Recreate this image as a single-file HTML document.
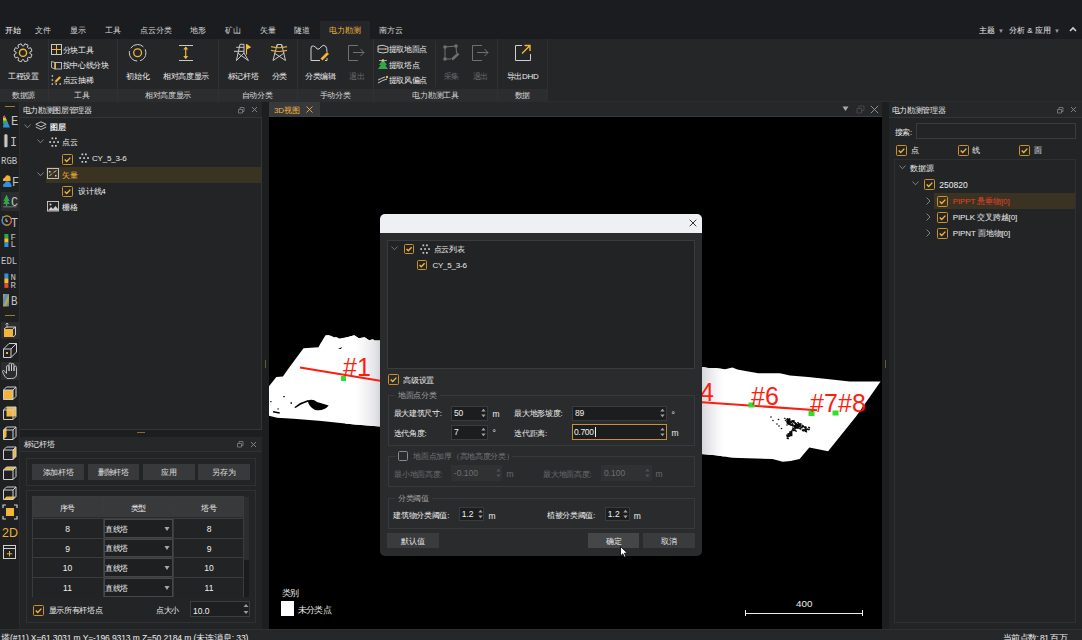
<!DOCTYPE html>
<html><head><meta charset="utf-8">
<style>
*{margin:0;padding:0;box-sizing:border-box}
html,body{width:1082px;height:640px;overflow:hidden;background:#232427;font-family:"Liberation Sans",sans-serif;color:#e6e6e6;font-size:8px;line-height:1}
.a{position:absolute}
.t{position:absolute;white-space:nowrap;line-height:10px;height:10px}
</style></head><body>

<div class="a" style="left:0px;top:0px;width:1082px;height:39px;background:#1b1c1f;"></div>
<div class="a" style="left:320px;top:21px;width:50px;height:18px;background:#252629;"></div>
<div class="a" style="left:0px;top:39px;width:1082px;height:62px;background:#252628;"></div>
<div class="a" style="left:0px;top:89px;width:547px;height:12px;background:#2c2d2f;"></div>
<div class="a" style="left:48px;top:39px;width:1px;height:62px;background:#303133;"></div>
<div class="a" style="left:117px;top:39px;width:1px;height:62px;background:#303133;"></div>
<div class="a" style="left:218px;top:39px;width:1px;height:62px;background:#303133;"></div>
<div class="a" style="left:297px;top:39px;width:1px;height:62px;background:#303133;"></div>
<div class="a" style="left:373px;top:39px;width:1px;height:62px;background:#303133;"></div>
<div class="a" style="left:497px;top:39px;width:1px;height:62px;background:#303133;"></div>
<div class="a" style="left:547px;top:39px;width:1px;height:62px;background:#2e2f31;"></div>
<div class="a" style="left:435px;top:41px;width:1px;height:46px;background:#303133;"></div>
<div class="a" style="left:0px;top:101px;width:1082px;height:1px;background:#2c2d30;"></div>
<div class="a" style="left:0px;top:102px;width:19px;height:528px;background:#1f2022;"></div>
<div class="a" style="left:19px;top:102px;width:1px;height:528px;background:#2b2c2e;"></div>
<div class="a" style="left:20px;top:102px;width:242px;height:328px;background:#232426;"></div>
<div class="a" style="left:20px;top:102px;width:242px;height:15px;background:#262729;"></div>
<div class="a" style="left:20px;top:117px;width:242px;height:1px;background:#343537;"></div>
<div class="a" style="left:261px;top:117px;width:1px;height:313px;background:#343537;"></div>
<div class="a" style="left:20px;top:429px;width:242px;height:1px;background:#343537;"></div>
<div class="a" style="left:20px;top:430px;width:242px;height:7px;background:#1d1e20;"></div>
<div class="a" style="left:137px;top:432px;width:8px;height:1px;background:#8a6a2a;"></div>
<div class="a" style="left:20px;top:437px;width:242px;height:192px;background:#232426;"></div>
<div class="a" style="left:20px;top:437px;width:242px;height:14px;background:#262729;"></div>
<div class="a" style="left:20px;top:451px;width:242px;height:1px;background:#303133;"></div>
<div class="a" style="left:262px;top:102px;width:7px;height:528px;background:#1d1e20;"></div>
<div class="a" style="left:882px;top:102px;width:7px;height:528px;background:#1d1e20;"></div>
<div class="a" style="left:265px;top:360px;width:1px;height:8px;background:#6a5a30;"></div>
<div class="a" style="left:885px;top:360px;width:1px;height:8px;background:#6a5a30;"></div>
<div class="a" style="left:269px;top:102px;width:613px;height:15px;background:#262729;"></div>
<div class="a" style="left:269px;top:102px;width:51px;height:15px;background:#38393b;"></div>
<div class="a" style="left:269px;top:116px;width:613px;height:1px;background:#3a3b3d;"></div>
<div class="a" style="left:269px;top:117px;width:613px;height:512px;background:#000;"></div>
<div class="a" style="left:889px;top:102px;width:193px;height:528px;background:#232426;"></div>
<div class="a" style="left:889px;top:102px;width:193px;height:15px;background:#262729;"></div>
<div class="a" style="left:889px;top:117px;width:193px;height:1px;background:#343537;"></div>
<div class="a" style="left:0px;top:630px;width:1082px;height:10px;background:#262729;"></div>
<div class="a" style="left:0px;top:629px;width:1082px;height:1px;background:#2e2f31;"></div>
<div class="t" style="left:5px;top:26px;color:#ffffff;font-size:8px;">开始</div>
<div class="t" style="left:35px;top:26px;color:#d6d6d6;font-size:8px;">文件</div>
<div class="t" style="left:70px;top:26px;color:#d6d6d6;font-size:8px;">显示</div>
<div class="t" style="left:105px;top:26px;color:#d6d6d6;font-size:8px;">工具</div>
<div class="t" style="left:140px;top:26px;color:#d6d6d6;font-size:8px;">点云分类</div>
<div class="t" style="left:190px;top:26px;color:#d6d6d6;font-size:8px;">地形</div>
<div class="t" style="left:225px;top:26px;color:#d6d6d6;font-size:8px;">矿山</div>
<div class="t" style="left:259.5px;top:26px;color:#d6d6d6;font-size:8px;">矢量</div>
<div class="t" style="left:294px;top:26px;color:#d6d6d6;font-size:8px;">隧道</div>
<div class="t" style="left:329px;top:26px;color:#f2b53a;font-size:8px;">电力勘测</div>
<div class="t" style="left:379px;top:26px;color:#d6d6d6;font-size:8px;">南方云</div>
<div class="t" style="left:979px;top:26px;color:#eeeeee;font-size:8px;">主题</div>
<div class="t" style="left:998px;top:26px;color:#9a9a9a;font-size:6px;">▼</div>
<div class="t" style="left:1009px;top:26px;color:#eeeeee;font-size:8px;">分析 &amp; 应用</div>
<div class="t" style="left:1054px;top:26px;color:#9a9a9a;font-size:6px;">▼</div>
<svg class="a" style="left:1069px;top:26px" width="8" height="6" viewBox="0 0 8 6" fill="none"><path d="M1 5 L4 2 L7 5" stroke="#d0d0d0" stroke-width="1.6"/></svg>
<svg class="a" style="left:13px;top:43px" width="20" height="20" viewBox="0 0 20 20" fill="none"><path d="M16.87 10.44 L19.01 11.65 L17.68 14.86 L15.31 14.21 L14.41 15.11 L15.06 17.48 L11.85 18.81 L10.64 16.67 L9.36 16.67 L8.15 18.81 L4.94 17.48 L5.59 15.11 L4.69 14.21 L2.32 14.86 L0.99 11.65 L3.13 10.44 L3.13 9.16 L0.99 7.95 L2.32 4.74 L4.69 5.39 L5.59 4.49 L4.94 2.12 L8.15 0.79 L9.36 2.93 L10.64 2.93 L11.85 0.79 L15.06 2.12 L14.41 4.49 L15.31 5.39 L17.68 4.74 L19.01 7.95 L16.87 9.16Z" stroke="#cfcfcf" stroke-width="1" stroke-linejoin="round"/><circle cx="10" cy="9.8" r="3.6" stroke="#f2b53a" stroke-width="1.4"/></svg>
<div class="t" style="left:-16.5px;width:80px;text-align:center;top:71.5px;color:#ececec;font-size:8px;letter-spacing:-0.3px">工程设置</div>
<svg class="a" style="left:51px;top:44px" width="11" height="11" viewBox="0 0 11 11" fill="none"><rect x="0.5" y="0.5" width="10" height="10" stroke="#c8c8c8"/><path d="M5.5 1 V10 M1 5.5 H10" stroke="#f2b53a" stroke-width="1"/></svg>
<div class="t" style="left:62.5px;top:45.5px;color:#f0f0f0;font-size:8px;letter-spacing:-0.3px;">分块工具</div>
<svg class="a" style="left:50px;top:60px" width="12" height="10" viewBox="0 0 12 10" fill="none"><path d="M1.5 1.5 L5 2.5 V9 L1.5 7.5Z" stroke="#c0c0c0" stroke-width="0.9"/><rect x="5" y="2.5" width="6.5" height="6.5" stroke="#c8c8c8" stroke-width="0.9"/><path d="M5.4 2.5 V9" stroke="#f2b53a" stroke-width="1.1"/></svg>
<div class="t" style="left:62.5px;top:60.599999999999994px;color:#f0f0f0;font-size:8px;letter-spacing:-0.3px;">按中心线分块</div>
<svg class="a" style="left:51px;top:75px" width="11" height="11" viewBox="0 0 11 11" fill="none"><g fill="#c8c8c8"><rect x="0.6" y="0.2" width="1.5" height="1.5"/><rect x="0.6" y="4.3" width="1.5" height="1.5"/><rect x="0.6" y="8.3" width="1.5" height="1.5"/><rect x="4.5" y="8.3" width="1.5" height="1.5"/><rect x="8.5" y="8.3" width="1.5" height="1.5"/></g><path d="M4.5 6.8 L9.3 2" stroke="#f2b53a" stroke-width="2.2"/><path d="M3.5 7.8 L4.6 6.7" stroke="#a07020" stroke-width="1.5"/></svg>
<div class="t" style="left:62.5px;top:75.5px;color:#f0f0f0;font-size:8px;letter-spacing:-0.3px;">点云抽稀</div>
<svg class="a" style="left:128px;top:43px" width="20" height="20" viewBox="0 0 20 20" fill="none"><circle cx="9.6" cy="9.8" r="8.3" stroke="#cfcfcf" stroke-width="1" stroke-dasharray="14.4 3" stroke-dashoffset="4"/><circle cx="9.6" cy="9.8" r="3.9" stroke="#f2b53a" stroke-width="1.3"/></svg>
<div class="t" style="left:97.80000000000001px;width:80px;text-align:center;top:71.5px;color:#ececec;font-size:8px;letter-spacing:-0.3px">初始化</div>
<svg class="a" style="left:178px;top:44px" width="16" height="18" viewBox="0 0 16 18" fill="none"><path d="M1 1.5 H15 M1 16.5 H15" stroke="#c8c8c8" stroke-width="1"/><path d="M7.7 3 V14.5" stroke="#f2b53a" stroke-width="1.2"/><path d="M5.2 5.5 L7.7 2.5 L10.2 5.5Z M5.2 12 L7.7 15 L10.2 12Z" fill="#f2b53a"/></svg>
<div class="t" style="left:146px;width:80px;text-align:center;top:71.5px;color:#ececec;font-size:8px;letter-spacing:-0.3px">相对高度显示</div>
<svg class="a" style="left:233px;top:43px" width="19" height="19" viewBox="0 0 19 19" fill="none"><path d="M7 1.3 H11 M3.2 4.3 H11 M1 8.3 H11 M7 1.3 L3.4 17.6 M11 1.3 V10 L15.4 17.6 M4.6 10 L15.4 17.6 M11 10 L3.4 17.6" stroke="#c8c8c8" stroke-width="1"/><path d="M13.5 1 V11.6" stroke="#f2b53a" stroke-width="1.1"/><path d="M13.8 1 L18.2 4.3 L13.8 6.6Z" fill="#f7c030"/></svg>
<div class="t" style="left:203px;width:80px;text-align:center;top:71.5px;color:#ececec;font-size:8px;letter-spacing:-0.3px">标记杆塔</div>
<svg class="a" style="left:270px;top:43px" width="18" height="19" viewBox="0 0 18 19" fill="none"><path d="M7 4.5 V1.5 H11.8 V4.5 M7 2 L3 17.5 M11.8 2 L15.5 17.5 M4.2 10 L15.5 17.5 M14.3 10 L3 17.5" stroke="#c8c8c8" stroke-width="1"/><path d="M1 3.6 Q9 5.8 17 3.6 M1 7.4 Q9 9.6 17 7.4" stroke="#e0a838" stroke-width="1.1"/></svg>
<div class="t" style="left:239.5px;width:80px;text-align:center;top:71.5px;color:#ececec;font-size:8px;letter-spacing:-0.3px">分类</div>
<svg class="a" style="left:310px;top:44px" width="20" height="18" viewBox="0 0 20 18" fill="none"><path d="M1 16.5 V4 Q1 1.5 3.5 2 Q6 2.5 7 5 Q9 6 11 3 Q13 0 15.5 2 Q17 3.5 17 8 M10 16.5 H1 M15 16.5 H17 V14" stroke="#cfcfcf" stroke-width="1"/><path d="M11.5 15.5 L18 9" stroke="#f2b53a" stroke-width="2.6"/></svg>
<div class="t" style="left:280.3px;width:80px;text-align:center;top:71.5px;color:#ececec;font-size:8px;letter-spacing:-0.3px">分类编辑</div>
<svg class="a" style="left:347px;top:44px" width="19" height="18" viewBox="0 0 19 18" fill="none"><path d="M11 1.5 H1.5 V16.5 H11 M6 8.5 H17 M13.5 5 L17 8.5 L13.5 12" stroke="#707173" stroke-width="1"/></svg>
<div class="t" style="left:316.8px;width:80px;text-align:center;top:71.5px;color:#6a6b6d;font-size:8px;letter-spacing:-0.3px">退出</div>
<svg class="a" style="left:377px;top:44px" width="12" height="10" viewBox="0 0 12 10" fill="none"><path d="M1 2 V8 Q6 10 11 8 V3 M1 2 Q6 0 11 3 M1 5 H9" stroke="#c8c8c8" stroke-width="1"/><path d="M8 5 H11" stroke="#f2b53a"/></svg>
<div class="t" style="left:388.5px;top:45.2px;color:#f0f0f0;font-size:8px;letter-spacing:-0.3px;">提取地面点</div>
<svg class="a" style="left:377px;top:59px" width="12" height="11" viewBox="0 0 12 11" fill="none"><path d="M6 0 L10 6 H2Z M6 3 L11 10 H1Z" fill="#2fa84a"/><circle cx="6" cy="1.5" r="1.3" fill="#f2b53a"/><path d="M2 1.5 H10" stroke="#c8c8c8" stroke-width="0.8"/></svg>
<div class="t" style="left:388.5px;top:60.599999999999994px;color:#f0f0f0;font-size:8px;letter-spacing:-0.3px;">提取塔点</div>
<svg class="a" style="left:377px;top:75px" width="12" height="10" viewBox="0 0 12 10" fill="none"><path d="M1 8 Q6 5 10 4 M1 5 Q5 3 8 2" stroke="#c8c8c8" stroke-width="1"/><circle cx="10" cy="2" r="1.2" fill="#f2b53a"/></svg>
<div class="t" style="left:388.5px;top:75.5px;color:#f0f0f0;font-size:8px;letter-spacing:-0.3px;">提取风偏点</div>
<svg class="a" style="left:442px;top:44px" width="18" height="18" viewBox="0 0 18 18" fill="none"><path d="M3 3 L14 2 L14.5 9 M3 3 L3 15 L9 15" stroke="#707173" stroke-width="1"/><g fill="#707173"><circle cx="3" cy="3" r="1.8"/><circle cx="14" cy="2" r="1.8"/><circle cx="3" cy="15" r="1.8"/></g><path d="M10 15.5 L16.5 9.5" stroke="#707173" stroke-width="2.4"/></svg>
<div class="t" style="left:411.3px;width:80px;text-align:center;top:71.5px;color:#6a6b6d;font-size:8px;letter-spacing:-0.3px">采集</div>
<svg class="a" style="left:471px;top:44px" width="19" height="18" viewBox="0 0 19 18" fill="none"><path d="M11 1.5 H1.5 V16.5 H11 M6 8.5 H17 M13.5 5 L17 8.5 L13.5 12" stroke="#707173" stroke-width="1"/></svg>
<div class="t" style="left:440.3px;width:80px;text-align:center;top:71.5px;color:#6a6b6d;font-size:8px;letter-spacing:-0.3px">退出</div>
<svg class="a" style="left:514px;top:43px" width="18" height="19" viewBox="0 0 18 19" fill="none"><path d="M8 2.5 H1.5 V17.5 H16.5 V11" stroke="#cfcfcf" stroke-width="1"/><path d="M8 10.5 L15.5 3 M10.5 2.5 H16 V8" stroke="#f2b53a" stroke-width="1.4"/></svg>
<div class="t" style="left:482.5px;width:80px;text-align:center;top:71.5px;color:#ececec;font-size:8px;letter-spacing:-0.3px">导出DHD</div>
<div class="t" style="left:-26.5px;width:100px;text-align:center;top:91px;color:#d8d8d8;font-size:8px;letter-spacing:-0.3px">数据源</div>
<div class="t" style="left:32px;width:100px;text-align:center;top:91px;color:#d8d8d8;font-size:8px;letter-spacing:-0.3px">工具</div>
<div class="t" style="left:118px;width:100px;text-align:center;top:91px;color:#d8d8d8;font-size:8px;letter-spacing:-0.3px">相对高度显示</div>
<div class="t" style="left:207px;width:100px;text-align:center;top:91px;color:#d8d8d8;font-size:8px;letter-spacing:-0.3px">自动分类</div>
<div class="t" style="left:285px;width:100px;text-align:center;top:91px;color:#d8d8d8;font-size:8px;letter-spacing:-0.3px">手动分类</div>
<div class="t" style="left:385.6px;width:100px;text-align:center;top:91px;color:#d8d8d8;font-size:8px;letter-spacing:-0.3px">电力勘测工具</div>
<div class="t" style="left:472.5px;width:100px;text-align:center;top:91px;color:#d8d8d8;font-size:8px;letter-spacing:-0.3px">数据</div>
<div class="a" style="left:5px;top:106px;width:10px;height:1px;background:#9a7a34;"></div>
<div class="a" style="left:5px;top:315px;width:10px;height:1px;background:#9a7a34;"></div>
<div class="a" style="left:1px;top:192px;width:18px;height:18.5px;background:#2c2d2f;"></div>
<div class="a" style="left:1px;top:322px;width:18px;height:17px;background:#2c2d2f;"></div>
<div class="a" style="left:1px;top:361.5px;width:18px;height:18.5px;background:#2c2d2f;"></div>
<svg class="a" style="left:2px;top:115px" width="9" height="13" viewBox="0 0 9 13" fill="none"><path d="M2.5 0.5 L8 12.5 H1Z" fill="#2f8fe0"/><path d="M2.5 0.5 L6.2 8.5 H1 V4Z" fill="#3aa84a"/><path d="M2.5 0.5 L4.8 5.5 H1 V2Z" fill="#f0c030"/><path d="M2.5 0.5 L3.6 3 H1Z" fill="#e04a3a"/></svg>
<div class="t" style="left:10.8px;top:114.5px;font-family:'Liberation Mono',monospace;font-size:13.5px;line-height:13.5px;height:13.5px;color:#c4c4c4;transform:scaleX(0.9);transform-origin:0 0">E</div>
<svg class="a" style="left:3px;top:134px" width="6" height="14" viewBox="0 0 6 14" fill="none"><defs><linearGradient id="gI" x1="0" x2="1"><stop offset="0" stop-color="#555"/><stop offset="0.5" stop-color="#e8e8e8"/><stop offset="1" stop-color="#555"/></linearGradient></defs><rect x="0.8" y="0.3" width="4.2" height="13" rx="1.5" fill="url(#gI)"/></svg>
<div class="t" style="left:10.2px;top:136px;font-family:'Liberation Mono',monospace;font-size:13px;line-height:13px;height:13px;color:#c4c4c4;transform:scaleX(0.9);transform-origin:0 0">I</div>
<div class="t" style="left:1.3px;top:156px;font-family:'Liberation Mono',monospace;font-size:11px;line-height:11px;height:11px;color:#c4c4c4;transform:scaleX(0.82);transform-origin:0 0">RGB</div>
<svg class="a" style="left:2px;top:174px" width="10" height="14" viewBox="0 0 10 14" fill="none"><path d="M1 7 Q0.5 4 3 3.5 Q4 0.5 6.5 1.5 Q9 2 8.5 5 Q9.5 6.5 8 7Z" fill="#f0b030"/><path d="M1.5 13 Q0 10.5 2.5 9.5 Q3.5 6.5 6.5 7.5 Q9 8 9 10.5 Q10.5 12 9 13Z" fill="#2f8fe0"/></svg>
<div class="t" style="left:12px;top:176px;font-family:'Liberation Mono',monospace;font-size:13px;line-height:13px;height:13px;color:#c4c4c4;transform:scaleX(0.9);transform-origin:0 0">F</div>
<svg class="a" style="left:3px;top:194px" width="14" height="14" viewBox="0 0 14 14" fill="none"><path d="M3.5 0.5 L6.5 7 H5 L6.8 10 H4.2 V12.5 H2.8 V10 H0.2 L2 7 H0.5Z" fill="#2fa84a"/><path d="M0 12.8 H13.5" stroke="#6a6b6d" stroke-width="1.2"/></svg>
<div class="t" style="left:10.8px;top:196px;font-family:'Liberation Mono',monospace;font-size:13px;line-height:13px;height:13px;color:#c4c4c4;transform:scaleX(0.9);transform-origin:0 0">C</div>
<svg class="a" style="left:1px;top:215px" width="12" height="11" viewBox="0 0 12 11" fill="none"><circle cx="5.8" cy="5.5" r="4.6" stroke="#e8a030" stroke-width="1.1"/><path d="M1.5 3.5 A4.6 4.6 0 0 0 4 9.8" stroke="#3a8fe0" stroke-width="1.1"/><path d="M8 9.5 A4.6 4.6 0 0 0 10.4 5" stroke="#d04a3a" stroke-width="1.1"/><path d="M5 3.5 V6.2 H7" stroke="#ddd" stroke-width="0.9"/><circle cx="2" cy="2" r="1" fill="#3a8fe0"/></svg>
<div class="t" style="left:11.2px;top:216.8px;font-family:'Liberation Mono',monospace;font-size:13px;line-height:13px;height:13px;color:#c4c4c4;transform:scaleX(0.9);transform-origin:0 0">T</div>
<svg class="a" style="left:4px;top:234px" width="5" height="13" viewBox="0 0 5 13" fill="none"><rect x="0.4" y="0" width="4" height="4.3" fill="#2fa84a"/><rect x="0.4" y="4.3" width="4" height="4.3" fill="#f0c030"/><rect x="0.4" y="8.6" width="4" height="4.4" fill="#2f8fe0"/></svg>
<div class="t" style="left:10.5px;top:233.6px;font-family:'Liberation Mono',monospace;font-size:9px;line-height:9px;height:9px;color:#c4c4c4;transform:scaleX(1.0);transform-origin:0 0">F</div>
<div class="t" style="left:10.5px;top:241.2px;font-family:'Liberation Mono',monospace;font-size:9px;line-height:9px;height:9px;color:#c4c4c4;transform:scaleX(1.0);transform-origin:0 0">L</div>
<div class="t" style="left:1.3px;top:255.8px;font-family:'Liberation Mono',monospace;font-size:11px;line-height:11px;height:11px;color:#c4c4c4;transform:scaleX(0.82);transform-origin:0 0">EDL</div>
<svg class="a" style="left:4px;top:273px" width="5" height="15" viewBox="0 0 5 15" fill="none"><rect x="0.4" y="0.5" width="4" height="4.8" fill="#2f8fe0"/><rect x="0.4" y="5.3" width="4" height="4.8" fill="#f0c030"/><rect x="0.4" y="10.1" width="4" height="4.8" fill="#e04a3a"/></svg>
<div class="t" style="left:10.5px;top:273.5px;font-family:'Liberation Mono',monospace;font-size:9px;line-height:9px;height:9px;color:#c4c4c4;transform:scaleX(1.0);transform-origin:0 0">N</div>
<div class="t" style="left:10.5px;top:281.5px;font-family:'Liberation Mono',monospace;font-size:9px;line-height:9px;height:9px;color:#c4c4c4;transform:scaleX(1.0);transform-origin:0 0">R</div>
<svg class="a" style="left:3px;top:294px" width="7" height="13" viewBox="0 0 7 13" fill="none"><defs><linearGradient id="gB" x1="0" y1="0" x2="1" y2="1"><stop offset="0" stop-color="#d0a040"/><stop offset="0.35" stop-color="#4a8ad0"/><stop offset="0.6" stop-color="#c0a848"/><stop offset="1" stop-color="#3a7ad0"/></linearGradient></defs><rect x="0" y="0" width="6" height="12.5" fill="url(#gB)"/></svg>
<div class="t" style="left:10.6px;top:296px;font-family:'Liberation Mono',monospace;font-size:12px;line-height:12px;height:12px;color:#c4c4c4;transform:scaleX(0.9);transform-origin:0 0">B</div>
<svg class="a" style="left:2px;top:322px" width="16" height="16" viewBox="0 0 16 16" fill="none"><path d="M5 1 V6 M3.5 2.5 L5 1 L6.5 2.5" stroke="#cfcfcf" stroke-width="0.8"/><rect x="2" y="7" width="9" height="8" fill="#f2b53a"/><path d="M2 7 L4.5 5 H13.5 V13 L11 15 M11 7 L13.5 5" stroke="#cfcfcf" stroke-width="1"/></svg>
<svg class="a" style="left:2px;top:342px" width="16" height="17" viewBox="0 0 16 17" fill="none"><path d="M1.5 7 L7 1.5 H14.5 V10 L9 15.5 H1.5Z M1.5 7 H9 V15.5 M9 7 L14.5 1.5" stroke="#cfcfcf" stroke-width="1"/><rect x="4" y="10" width="2" height="2" fill="#f2b53a"/></svg>
<svg class="a" style="left:2px;top:362px" width="16" height="18" viewBox="0 0 16 18" fill="none"><path d="M5 16.5 Q3 15 1.5 12 L0.5 9.5 Q0.5 8.3 1.8 8.6 Q2.8 9 4.5 11.5 V5 Q4.5 3.5 5.75 3.5 Q7 3.5 7 5 V9 V2.5 Q7 1 8.25 1 Q9.5 1 9.5 2.5 V9 V3 Q9.5 1.5 10.75 1.5 Q12 1.5 12 3 V9 V5.5 Q12 4 13.25 4 Q14.5 4 14.5 5.5 V12 Q14.5 16.5 9.5 16.5Z" stroke="#d0d0d0" stroke-width="0.9" stroke-linejoin="round"/></svg>
<svg class="a" style="left:2px;top:385px" width="16" height="16" viewBox="0 0 16 16" fill="none"><rect x="1.5" y="5" width="9.5" height="9.5" fill="#f2b53a"/><path d="M1.5 5 L4.5 2 H14 V11.5 L11 14.5 H1.5Z M1.5 5 H11 V14.5 M11 5 L14 2" stroke="#cfcfcf" stroke-width="1"/></svg>
<svg class="a" style="left:2px;top:405px" width="16" height="16" viewBox="0 0 16 16" fill="none"><rect x="4.5" y="2" width="9.5" height="9.5" fill="#f2b53a"/><path d="M1.5 5 L4.5 2 H14 V11.5 L11 14.5 H1.5Z M1.5 5 H11 V14.5 M11 5 L14 2" stroke="#cfcfcf" stroke-width="1"/></svg>
<svg class="a" style="left:2px;top:425px" width="16" height="16" viewBox="0 0 16 16" fill="none"><path d="M1.5 5 L4.5 2 V11.5 L1.5 14.5Z" fill="#f2b53a"/><path d="M1.5 5 L4.5 2 H14 V11.5 L11 14.5 H1.5Z M1.5 5 H11 V14.5 M11 5 L14 2" stroke="#cfcfcf" stroke-width="1"/></svg>
<svg class="a" style="left:2px;top:445px" width="16" height="16" viewBox="0 0 16 16" fill="none"><path d="M11 5 L14 2 V11.5 L11 14.5Z" fill="#f2b53a"/><path d="M1.5 5 L4.5 2 H14 V11.5 L11 14.5 H1.5Z M1.5 5 H11 V14.5 M11 5 L14 2" stroke="#cfcfcf" stroke-width="1"/></svg>
<svg class="a" style="left:2px;top:465px" width="16" height="16" viewBox="0 0 16 16" fill="none"><path d="M1.5 5 L4.5 2 H14 L11 5Z" fill="#f2b53a"/><path d="M1.5 5 L4.5 2 H14 V11.5 L11 14.5 H1.5Z M1.5 5 H11 V14.5 M11 5 L14 2" stroke="#cfcfcf" stroke-width="1"/></svg>
<svg class="a" style="left:2px;top:485px" width="16" height="16" viewBox="0 0 16 16" fill="none"><path d="M1.5 14.5 L4.5 11.5 H14 L11 14.5Z" fill="#f2b53a"/><path d="M1.5 5 L4.5 2 H14 V11.5 L11 14.5 H1.5Z M1.5 5 H11 V14.5 M11 5 L14 2" stroke="#cfcfcf" stroke-width="1"/></svg>
<svg class="a" style="left:2px;top:504px" width="16" height="16" viewBox="0 0 16 16" fill="none"><path d="M1 4 V1 H4 M12 1 H15 V4 M15 12 V15 H12 M4 15 H1 V12" stroke="#cfcfcf" stroke-width="1.2"/><rect x="4" y="4" width="8" height="8" fill="#f2b53a"/></svg>
<div class="t" style="left:2px;top:527.5px;font-size:12.5px;color:#eab33c;line-height:10px">2D</div>
<svg class="a" style="left:2px;top:544px" width="15" height="16" viewBox="0 0 15 16" fill="none"><rect x="1.5" y="1.5" width="12" height="13" stroke="#cfcfcf" stroke-width="1"/><path d="M1.5 4.5 H13.5" stroke="#cfcfcf"/><path d="M7.5 7 V12.5 M4.8 9.8 H10.2" stroke="#f2b53a" stroke-width="1"/></svg>
<div class="t" style="left:22.5px;top:106px;color:#e8e8e8;font-size:8px;letter-spacing:-0.3px;">电力勘测图层管理器</div>
<svg class="a" style="left:237px;top:106px" width="8" height="8" viewBox="0 0 8 8" fill="none"><path d="M1.5 3.5 H5.5 V7 H1.5Z M3 3.5 V1.5 H7 V5.5 H5.5" stroke="#7a7b7d" stroke-width="0.9"/></svg>
<svg class="a" style="left:251px;top:106px" width="7" height="7" viewBox="0 0 7 7" fill="none"><path d="M1 1 L6 6 M6 1 L1 6" stroke="#8a8b8d" stroke-width="0.9"/></svg>
<svg class="a" style="left:24px;top:123.6px" width="7" height="5" viewBox="0 0 7 5" fill="none"><path d="M0.5 0.5 L3.5 3.8 L6.5 0.5" stroke="#8a8b8d" stroke-width="0.9"/></svg>
<svg class="a" style="left:35px;top:121px" width="12" height="11" viewBox="0 0 12 11" fill="none"><path d="M6 0.8 L11.2 3.3 L6 5.8 L0.8 3.3Z M0.8 6 L6 8.5 L11.2 6" stroke="#cfcfcf" stroke-width="0.9"/></svg>
<div class="t" style="left:50px;top:122.6px;color:#f2f2f2;font-size:8px;letter-spacing:-0.3px;font-weight:bold">图层</div>
<svg class="a" style="left:36.5px;top:139.2px" width="7" height="5" viewBox="0 0 7 5" fill="none"><path d="M0.5 0.5 L3.5 3.8 L6.5 0.5" stroke="#8a8b8d" stroke-width="0.9"/></svg>
<svg class="a" style="left:48.5px;top:137px" width="10" height="10" viewBox="0 0 10 10" fill="none"><rect x="2.5" y="0.5" width="1.7" height="1.7" fill="#cfcfcf"/><rect x="6" y="0.5" width="1.7" height="1.7" fill="#cfcfcf"/><rect x="0.3" y="4.2" width="1.7" height="1.7" fill="#cfcfcf"/><rect x="4.2" y="4.2" width="1.7" height="1.7" fill="#cfcfcf"/><rect x="8.2" y="4.2" width="1.7" height="1.7" fill="#cfcfcf"/><rect x="2.5" y="8" width="1.7" height="1.7" fill="#cfcfcf"/><rect x="6" y="8" width="1.7" height="1.7" fill="#cfcfcf"/></svg>
<div class="t" style="left:62px;top:138.2px;color:#eeeeee;font-size:8px;letter-spacing:-0.3px;">点云</div>
<svg class="a" style="left:62px;top:153.5px" width="11" height="11" viewBox="0 0 11 11" fill="none"><rect x="0.5" y="0.5" width="10" height="10" rx="1" stroke="#c8922c" stroke-width="1"/><path d="M2.75 5.5 L4.73 7.48 L8.36 3.63" stroke="#f2b53a" stroke-width="1.4"/></svg>
<svg class="a" style="left:78.5px;top:153px" width="10" height="10" viewBox="0 0 10 10" fill="none"><rect x="2.5" y="0.5" width="1.7" height="1.7" fill="#cfcfcf"/><rect x="6" y="0.5" width="1.7" height="1.7" fill="#cfcfcf"/><rect x="0.3" y="4.2" width="1.7" height="1.7" fill="#cfcfcf"/><rect x="4.2" y="4.2" width="1.7" height="1.7" fill="#cfcfcf"/><rect x="8.2" y="4.2" width="1.7" height="1.7" fill="#cfcfcf"/><rect x="2.5" y="8" width="1.7" height="1.7" fill="#cfcfcf"/><rect x="6" y="8" width="1.7" height="1.7" fill="#cfcfcf"/></svg>
<div class="t" style="left:92px;top:154.4px;color:#e8e8e8;font-size:8px;letter-spacing:-0.2px;">CY_5_3-6</div>
<div class="a" style="left:46px;top:167px;width:215px;height:16px;background:#3b3322;"></div>
<svg class="a" style="left:36.5px;top:171.6px" width="7" height="5" viewBox="0 0 7 5" fill="none"><path d="M0.5 0.5 L3.5 3.8 L6.5 0.5" stroke="#8a8b8d" stroke-width="0.9"/></svg>
<svg class="a" style="left:47px;top:168px" width="12" height="12" viewBox="0 0 12 12" fill="none"><rect x="0.5" y="0.5" width="11" height="10" stroke="#cfcfcf" stroke-width="0.9"/><path d="M2.5 8 L5 5.5 M6.5 4.5 L9.5 2.5" stroke="#cfcfcf" stroke-width="0.9"/><rect x="2" y="3" width="1.5" height="1.5" fill="#cfcfcf"/><rect x="8" y="7" width="1.5" height="1.5" fill="#cfcfcf"/></svg>
<div class="t" style="left:62px;top:170.6px;color:#f2b53a;font-size:8px;letter-spacing:-0.3px;">矢量</div>
<svg class="a" style="left:62px;top:186px" width="11" height="11" viewBox="0 0 11 11" fill="none"><rect x="0.5" y="0.5" width="10" height="10" rx="1" stroke="#c8922c" stroke-width="1"/><path d="M2.75 5.5 L4.73 7.48 L8.36 3.63" stroke="#f2b53a" stroke-width="1.4"/></svg>
<div class="t" style="left:78.2px;top:186.7px;color:#eeeeee;font-size:8px;letter-spacing:-0.3px;">设计线4</div>
<svg class="a" style="left:47px;top:201px" width="12" height="11" viewBox="0 0 12 11" fill="none"><rect x="0.5" y="0.5" width="11" height="9.5" stroke="#cfcfcf" stroke-width="0.9"/><path d="M1 9.5 L4 6 L6 8 L8.5 5 L11 8 V9.5Z" fill="#cfcfcf"/><circle cx="3.5" cy="3.5" r="1" fill="#cfcfcf"/></svg>
<div class="t" style="left:62px;top:202.6px;color:#eeeeee;font-size:8px;letter-spacing:-0.3px;">栅格</div>
<div class="t" style="left:23.5px;top:440px;color:#e8e8e8;font-size:8px;letter-spacing:-0.3px;">标记杆塔</div>
<svg class="a" style="left:236px;top:440px" width="8" height="8" viewBox="0 0 8 8" fill="none"><path d="M1.5 3.5 H5.5 V7 H1.5Z M3 3.5 V1.5 H7 V5.5 H5.5" stroke="#7a7b7d" stroke-width="0.9"/></svg>
<svg class="a" style="left:250px;top:441px" width="7" height="7" viewBox="0 0 7 7" fill="none"><path d="M1 1 L6 6 M6 1 L1 6" stroke="#8a8b8d" stroke-width="0.9"/></svg>
<div class="a" style="left:26px;top:458px;width:230px;height:28px;border:1px solid #303133"></div>
<div class="a" style="left:32px;top:464px;width:52px;height:16px;background:#38393b;"></div>
<div class="t" style="left:32px;width:52px;text-align:center;top:468px;color:#e0e0e0;letter-spacing:-0.3px">添加杆塔</div>
<div class="a" style="left:88px;top:464px;width:51px;height:16px;background:#38393b;"></div>
<div class="t" style="left:88px;width:51px;text-align:center;top:468px;color:#e0e0e0;letter-spacing:-0.3px">删除杆塔</div>
<div class="a" style="left:143px;top:464px;width:51.5px;height:16px;background:#38393b;"></div>
<div class="t" style="left:143px;width:51.5px;text-align:center;top:468px;color:#e0e0e0;letter-spacing:-0.3px">应用</div>
<div class="a" style="left:198px;top:464px;width:52px;height:16px;background:#38393b;"></div>
<div class="t" style="left:198px;width:52px;text-align:center;top:468px;color:#e0e0e0;letter-spacing:-0.3px">另存为</div>
<div class="a" style="left:26px;top:490px;width:230px;height:133px;border:1px solid #303133"></div>
<div class="a" style="left:32px;top:496px;width:212px;height:101px;background:#3a3b3d;"></div>
<div class="a" style="left:33px;top:497px;width:70px;height:20px;background:#38393b;"></div>
<div class="a" style="left:104px;top:497px;width:69px;height:20px;background:#38393b;"></div>
<div class="a" style="left:174px;top:497px;width:69px;height:20px;background:#38393b;"></div>
<div class="a" style="left:33px;top:517px;width:210px;height:1px;background:#2a2b2d;"></div>
<div class="t" style="left:32px;width:71px;text-align:center;top:504px;color:#f0f0f0;letter-spacing:-0.3px">序号</div>
<div class="t" style="left:104px;width:69px;text-align:center;top:504px;color:#f0f0f0;letter-spacing:-0.3px">类型</div>
<div class="t" style="left:174px;width:70px;text-align:center;top:504px;color:#f0f0f0;letter-spacing:-0.3px">塔号</div>
<div class="a" style="left:33px;top:519px;width:70px;height:19px;background:#222325;"></div>
<div class="a" style="left:104px;top:519px;width:69px;height:19px;background:#222325;"></div>
<div class="a" style="left:174px;top:519px;width:69px;height:19px;background:#222325;"></div>
<div class="a" style="left:104px;top:519px;width:69px;height:19px;border:1px solid #464749;background:#1e1f21"></div>
<div class="t" style="left:32px;width:71px;text-align:center;top:524.0px;color:#f0f0f0;font-size:8.5px">8</div>
<div class="t" style="left:174px;width:70px;text-align:center;top:524.0px;color:#f0f0f0;font-size:8.5px">8</div>
<div class="t" style="left:105px;top:524.5px;color:#f0f0f0;font-size:8px;letter-spacing:-0.3px;">直线塔</div>
<svg class="a" style="left:164px;top:525.5px" width="6" height="6" viewBox="0 0 6 6" fill="none"><path d="M0.5 1 H5.5 L3 5Z" fill="#a8a8a8"/></svg>
<div class="a" style="left:33px;top:539px;width:70px;height:18px;background:#222325;"></div>
<div class="a" style="left:104px;top:539px;width:69px;height:18px;background:#222325;"></div>
<div class="a" style="left:174px;top:539px;width:69px;height:18px;background:#222325;"></div>
<div class="a" style="left:104px;top:539px;width:69px;height:18px;border:1px solid #464749;background:#1e1f21"></div>
<div class="t" style="left:32px;width:71px;text-align:center;top:543.5px;color:#f0f0f0;font-size:8.5px">9</div>
<div class="t" style="left:174px;width:70px;text-align:center;top:543.5px;color:#f0f0f0;font-size:8.5px">9</div>
<div class="t" style="left:105px;top:544.0px;color:#f0f0f0;font-size:8px;letter-spacing:-0.3px;">直线塔</div>
<svg class="a" style="left:164px;top:545.0px" width="6" height="6" viewBox="0 0 6 6" fill="none"><path d="M0.5 1 H5.5 L3 5Z" fill="#a8a8a8"/></svg>
<div class="a" style="left:33px;top:558px;width:70px;height:19px;background:#222325;"></div>
<div class="a" style="left:104px;top:558px;width:69px;height:19px;background:#222325;"></div>
<div class="a" style="left:174px;top:558px;width:69px;height:19px;background:#222325;"></div>
<div class="a" style="left:104px;top:558px;width:69px;height:19px;border:1px solid #464749;background:#1e1f21"></div>
<div class="t" style="left:32px;width:71px;text-align:center;top:563.0px;color:#f0f0f0;font-size:8.5px">10</div>
<div class="t" style="left:174px;width:70px;text-align:center;top:563.0px;color:#f0f0f0;font-size:8.5px">10</div>
<div class="t" style="left:105px;top:563.5px;color:#f0f0f0;font-size:8px;letter-spacing:-0.3px;">直线塔</div>
<svg class="a" style="left:164px;top:564.5px" width="6" height="6" viewBox="0 0 6 6" fill="none"><path d="M0.5 1 H5.5 L3 5Z" fill="#a8a8a8"/></svg>
<div class="a" style="left:33px;top:578px;width:70px;height:19px;background:#222325;"></div>
<div class="a" style="left:104px;top:578px;width:69px;height:19px;background:#222325;"></div>
<div class="a" style="left:174px;top:578px;width:69px;height:19px;background:#222325;"></div>
<div class="a" style="left:104px;top:578px;width:69px;height:19px;border:1px solid #464749;background:#1e1f21"></div>
<div class="t" style="left:32px;width:71px;text-align:center;top:583.0px;color:#f0f0f0;font-size:8.5px">11</div>
<div class="t" style="left:174px;width:70px;text-align:center;top:583.0px;color:#f0f0f0;font-size:8.5px">11</div>
<div class="t" style="left:105px;top:583.5px;color:#f0f0f0;font-size:8px;letter-spacing:-0.3px;">直线塔</div>
<svg class="a" style="left:164px;top:584.5px" width="6" height="6" viewBox="0 0 6 6" fill="none"><path d="M0.5 1 H5.5 L3 5Z" fill="#a8a8a8"/></svg>
<div class="a" style="left:244px;top:497px;width:5px;height:100px;background:#1a1b1d;"></div>
<div class="a" style="left:244px;top:497px;width:5px;height:63px;background:#2c2d2f;"></div>
<svg class="a" style="left:33px;top:604.5px" width="11" height="11" viewBox="0 0 11 11" fill="none"><rect x="0.5" y="0.5" width="10" height="10" rx="1" stroke="#c8922c" stroke-width="1"/><path d="M2.75 5.5 L4.73 7.48 L8.36 3.63" stroke="#f2b53a" stroke-width="1.4"/></svg>
<div class="t" style="left:48.5px;top:605.8px;color:#eeeeee;font-size:8px;letter-spacing:-0.3px;">显示所有杆塔点</div>
<div class="t" style="left:156px;top:605.8px;color:#eeeeee;font-size:8px;letter-spacing:-0.3px;">点大小</div>
<div class="a" style="left:190px;top:601px;width:60px;height:16px;border:1px solid #3c3d3f;background:#1e1f21"></div>
<div class="t" style="left:193px;top:605.5px;color:#f0f0f0;font-size:8.5px;">10.0</div>
<svg class="a" style="left:243px;top:603px" width="6" height="12" viewBox="0 0 6 12" fill="none"><path d="M0.5 4 L3 1 L5.5 4Z M0.5 8 L3 11 L5.5 8Z" fill="#9a9a9a"/></svg>
<div class="t" style="left:274px;top:105.5px;color:#f2b53a;font-size:8px;letter-spacing:-0.2px;">3D视图</div>
<svg class="a" style="left:306px;top:106px" width="7" height="7" viewBox="0 0 7 7" fill="none"><path d="M0.5 0.5 L6.5 6.5 M6.5 0.5 L0.5 6.5" stroke="#f2b53a" stroke-width="0.9"/></svg>
<svg class="a" style="left:842px;top:106px" width="7" height="6" viewBox="0 0 7 6" fill="none"><path d="M0.5 0.5 H6.5 L3.5 5Z" fill="#aaaaaa"/></svg>
<svg class="a" style="left:856px;top:105px" width="9" height="9" viewBox="0 0 9 9" fill="none"><path d="M1 3.5 H5.5 V8 H1Z M3 3.5 V1 H8 V5.5 H5.5" stroke="#4a4b4d" stroke-width="0.9"/></svg>
<svg class="a" style="left:870px;top:105px" width="9" height="9" viewBox="0 0 9 9" fill="none"><path d="M0.8 0.8 L8.2 8.2 M8.2 0.8 L0.8 8.2" stroke="#9a9a9a" stroke-width="0.9"/></svg>
<svg class="a" style="left:269px;top:117px" width="613" height="512" viewBox="0 0 613 512"><defs>
<linearGradient id="shL" gradientUnits="userSpaceOnUse" x1="87" y1="0" x2="111" y2="0"><stop offset="0" stop-color="#fff"/><stop offset="0.5" stop-color="#f0f0f2"/><stop offset="0.8" stop-color="#e4e4e8"/><stop offset="1" stop-color="#d4d5d9"/></linearGradient>
<linearGradient id="shR" gradientUnits="userSpaceOnUse" x1="433" y1="0" x2="455" y2="0"><stop offset="0" stop-color="#d6d7db"/><stop offset="0.35" stop-color="#e8e8ec"/><stop offset="0.7" stop-color="#f6f6f8"/><stop offset="1" stop-color="#fff"/></linearGradient>
</defs>
<polygon points="-0.7,270.2 7.3,259.9 13.9,259.4 19.5,251.4 34.5,231.3 49.5,230.3 51.5,226.5 56.5,218.3 59.4,218.0 62.6,219.0 64.9,220.3 67.2,220.0 70.4,221.6 78.2,220.3 85.3,218.3 89.8,221.3 95.6,220.3 100.2,223.2 104.0,222.2 105.3,223.5 111.0,223.5 231.0,238.0 432.0,249.7 439.3,250.9 446.0,250.9 456.0,252.2 463.4,250.5 468.4,252.6 475.1,253.8 489.2,256.3 510.9,256.3 521.0,258.5 539.1,260.0 560.4,262.3 580.7,264.6 611.6,264.6 587.2,299.2 559.1,334.3 540.3,330.5 530.6,342.1 521.6,344.0 513.8,344.7 503.4,342.1 463.3,340.8 446.5,338.2 432.0,336.9 231.0,323.0 111.0,309.6 85.7,307.4 52.5,304.0 24.7,301.8 8.1,300.7 -0.7,298.5" fill="#ffffff"/>
<rect x="76" y="213" width="36" height="100" fill="url(#shL)" clip-path="url(#cl)"/>
<clipPath id="cl"><polygon points="-0.7,270.2 7.3,259.9 13.9,259.4 19.5,251.4 34.5,231.3 49.5,230.3 51.5,226.5 56.5,218.3 59.4,218.0 62.6,219.0 64.9,220.3 67.2,220.0 70.4,221.6 78.2,220.3 85.3,218.3 89.8,221.3 95.6,220.3 100.2,223.2 104.0,222.2 105.3,223.5 111.0,223.5 231.0,238.0 432.0,249.7 439.3,250.9 446.0,250.9 456.0,252.2 463.4,250.5 468.4,252.6 475.1,253.8 489.2,256.3 510.9,256.3 521.0,258.5 539.1,260.0 560.4,262.3 580.7,264.6 611.6,264.6 587.2,299.2 559.1,334.3 540.3,330.5 530.6,342.1 521.6,344.0 513.8,344.7 503.4,342.1 463.3,340.8 446.5,338.2 432.0,336.9 231.0,323.0 111.0,309.6 85.7,307.4 52.5,304.0 24.7,301.8 8.1,300.7 -0.7,298.5"/></clipPath>
<rect x="433" y="243" width="22" height="100" fill="url(#shR)" clip-path="url(#cl)"/>
<g fill="#000">
<path d="M38.60000000000002 283.5 Q44 281.5 48 285 Q54 286.5 59.69999999999999 288.5 Q55 294.5 46 293 Q40 290 38.60000000000002 283.5Z"/>
<path d="M25.30000000000001 290.2 L31 286 L39 283 L39.5 284.5 L32 287.5 L26.5 291Z"/>
<path d="M4.199999999999989 294 L10.899999999999977 295.3 L10.5 296.8 L4 295.5Z"/>
<rect x="14.300000000000011" y="279" width="1.5" height="1.2"/>
<rect x="1.3000000000000114" y="284" width="1.2" height="1.2"/>
<rect x="21.5" y="285.3" width="1.5" height="1.5"/>
<rect x="8.5" y="291.3" width="1.2" height="1.2"/>
<path d="M69 232 L73 230 L72 232Z"/>
</g>
<g fill="#0a0a0a"><ellipse cx="521.8" cy="316.2" rx="0.8" ry="0.8" transform="rotate(25 521.8 316.2)"/><ellipse cx="523.3" cy="306.8" rx="0.7" ry="0.7" transform="rotate(25 523.3 306.8)"/><ellipse cx="516.9" cy="303.7" rx="1.4" ry="0.6" transform="rotate(25 516.9 303.7)"/><ellipse cx="522.1" cy="318.4" rx="1.2" ry="0.7" transform="rotate(25 522.1 318.4)"/><ellipse cx="536.7" cy="314.3" rx="1.0" ry="0.6" transform="rotate(25 536.7 314.3)"/><ellipse cx="518.8" cy="306.3" rx="0.9" ry="0.8" transform="rotate(25 518.8 306.3)"/><ellipse cx="526.3" cy="311.8" rx="0.8" ry="0.5" transform="rotate(25 526.3 311.8)"/><ellipse cx="522.3" cy="304.9" rx="1.0" ry="0.8" transform="rotate(25 522.3 304.9)"/><ellipse cx="526.2" cy="309.2" rx="1.3" ry="0.6" transform="rotate(25 526.2 309.2)"/><ellipse cx="526.0" cy="313.7" rx="1.4" ry="0.6" transform="rotate(25 526.0 313.7)"/><ellipse cx="537.0" cy="311.9" rx="1.4" ry="0.6" transform="rotate(25 537.0 311.9)"/><ellipse cx="525.9" cy="308.8" rx="1.4" ry="0.8" transform="rotate(25 525.9 308.8)"/><ellipse cx="528.9" cy="309.2" rx="1.2" ry="0.8" transform="rotate(25 528.9 309.2)"/><ellipse cx="528.4" cy="310.1" rx="1.1" ry="0.8" transform="rotate(25 528.4 310.1)"/><ellipse cx="519.1" cy="304.9" rx="1.6" ry="0.9" transform="rotate(25 519.1 304.9)"/><ellipse cx="522.1" cy="316.8" rx="0.7" ry="0.7" transform="rotate(25 522.1 316.8)"/><ellipse cx="519.2" cy="302.5" rx="1.4" ry="0.6" transform="rotate(25 519.2 302.5)"/><ellipse cx="522.0" cy="307.8" rx="0.8" ry="0.7" transform="rotate(25 522.0 307.8)"/><ellipse cx="526.7" cy="313.8" rx="1.5" ry="0.6" transform="rotate(25 526.7 313.8)"/><ellipse cx="525.6" cy="309.4" rx="1.6" ry="0.6" transform="rotate(25 525.6 309.4)"/><ellipse cx="519.8" cy="303.6" rx="1.1" ry="0.8" transform="rotate(25 519.8 303.6)"/><ellipse cx="520.7" cy="316.3" rx="1.0" ry="0.8" transform="rotate(25 520.7 316.3)"/><ellipse cx="538.7" cy="312.2" rx="1.3" ry="0.8" transform="rotate(25 538.7 312.2)"/><ellipse cx="519.8" cy="305.6" rx="1.5" ry="0.9" transform="rotate(25 519.8 305.6)"/><ellipse cx="523.4" cy="313.7" rx="1.3" ry="0.5" transform="rotate(25 523.4 313.7)"/><ellipse cx="517.3" cy="302.2" rx="1.0" ry="0.5" transform="rotate(25 517.3 302.2)"/><ellipse cx="515.6" cy="301.3" rx="1.0" ry="0.5" transform="rotate(25 515.6 301.3)"/><ellipse cx="529.8" cy="307.6" rx="0.9" ry="0.7" transform="rotate(25 529.8 307.6)"/><ellipse cx="523.5" cy="308.7" rx="1.6" ry="0.7" transform="rotate(25 523.5 308.7)"/><ellipse cx="526.0" cy="305.6" rx="1.0" ry="0.6" transform="rotate(25 526.0 305.6)"/><ellipse cx="527.9" cy="307.8" rx="1.6" ry="0.8" transform="rotate(25 527.9 307.8)"/><ellipse cx="520.4" cy="302.2" rx="1.2" ry="1.0" transform="rotate(25 520.4 302.2)"/><ellipse cx="536.8" cy="309.9" rx="1.0" ry="0.6" transform="rotate(25 536.8 309.9)"/><ellipse cx="528.4" cy="310.8" rx="1.0" ry="0.6" transform="rotate(25 528.4 310.8)"/><ellipse cx="536.8" cy="312.8" rx="1.4" ry="0.9" transform="rotate(25 536.8 312.8)"/><ellipse cx="532.2" cy="310.3" rx="1.0" ry="0.5" transform="rotate(25 532.2 310.3)"/><ellipse cx="518.7" cy="318.9" rx="1.3" ry="1.0" transform="rotate(25 518.7 318.9)"/><ellipse cx="528.6" cy="310.3" rx="1.6" ry="0.7" transform="rotate(25 528.6 310.3)"/><ellipse cx="520.8" cy="303.8" rx="0.9" ry="0.8" transform="rotate(25 520.8 303.8)"/><ellipse cx="530.8" cy="308.2" rx="1.3" ry="0.9" transform="rotate(25 530.8 308.2)"/><ellipse cx="519.5" cy="306.6" rx="1.4" ry="0.9" transform="rotate(25 519.5 306.6)"/><ellipse cx="526.2" cy="309.4" rx="1.0" ry="0.9" transform="rotate(25 526.2 309.4)"/><ellipse cx="530.3" cy="307.1" rx="1.6" ry="0.9" transform="rotate(25 530.3 307.1)"/><ellipse cx="519.2" cy="303.1" rx="1.5" ry="0.9" transform="rotate(25 519.2 303.1)"/><ellipse cx="521.5" cy="307.5" rx="1.3" ry="0.7" transform="rotate(25 521.5 307.5)"/><ellipse cx="524.5" cy="311.4" rx="1.6" ry="0.8" transform="rotate(25 524.5 311.4)"/><ellipse cx="530.3" cy="307.9" rx="1.5" ry="0.9" transform="rotate(25 530.3 307.9)"/><ellipse cx="520.7" cy="304.2" rx="0.9" ry="0.8" transform="rotate(25 520.7 304.2)"/><ellipse cx="521.9" cy="315.5" rx="1.5" ry="0.7" transform="rotate(25 521.9 315.5)"/><ellipse cx="527.4" cy="309.9" rx="1.1" ry="1.0" transform="rotate(25 527.4 309.9)"/><ellipse cx="528.2" cy="308.1" rx="0.7" ry="0.7" transform="rotate(25 528.2 308.1)"/><ellipse cx="519.7" cy="318.5" rx="0.9" ry="0.7" transform="rotate(25 519.7 318.5)"/><ellipse cx="533.2" cy="309.1" rx="1.2" ry="0.8" transform="rotate(25 533.2 309.1)"/><ellipse cx="532.7" cy="310.9" rx="0.9" ry="0.6" transform="rotate(25 532.7 310.9)"/><ellipse cx="528.3" cy="310.1" rx="1.4" ry="1.0" transform="rotate(25 528.3 310.1)"/><ellipse cx="527.2" cy="307.5" rx="1.2" ry="0.8" transform="rotate(25 527.2 307.5)"/><ellipse cx="527.1" cy="307.4" rx="1.5" ry="0.8" transform="rotate(25 527.1 307.4)"/><ellipse cx="530.8" cy="307.9" rx="1.2" ry="1.0" transform="rotate(25 530.8 307.9)"/><ellipse cx="534.0" cy="308.9" rx="1.1" ry="0.5" transform="rotate(25 534.0 308.9)"/><ellipse cx="520.6" cy="306.6" rx="1.4" ry="0.9" transform="rotate(25 520.6 306.6)"/><ellipse cx="521.5" cy="318.5" rx="0.8" ry="0.9" transform="rotate(25 521.5 318.5)"/><ellipse cx="537.2" cy="314.7" rx="1.1" ry="0.7" transform="rotate(25 537.2 314.7)"/><ellipse cx="540.1" cy="310.5" rx="1.1" ry="0.8" transform="rotate(25 540.1 310.5)"/><ellipse cx="522.2" cy="315.0" rx="1.3" ry="0.5" transform="rotate(25 522.2 315.0)"/><ellipse cx="529.0" cy="305.8" rx="1.0" ry="0.8" transform="rotate(25 529.0 305.8)"/><ellipse cx="526.5" cy="310.8" rx="1.4" ry="1.0" transform="rotate(25 526.5 310.8)"/><ellipse cx="519.6" cy="317.3" rx="1.4" ry="0.6" transform="rotate(25 519.6 317.3)"/><ellipse cx="519.5" cy="307.0" rx="1.4" ry="0.6" transform="rotate(25 519.5 307.0)"/><ellipse cx="522.0" cy="305.2" rx="1.3" ry="0.5" transform="rotate(25 522.0 305.2)"/><ellipse cx="520.3" cy="319.0" rx="0.8" ry="1.0" transform="rotate(25 520.3 319.0)"/><ellipse cx="532.2" cy="306.9" rx="1.5" ry="0.5" transform="rotate(25 532.2 306.9)"/><ellipse cx="535.8" cy="310.4" rx="1.2" ry="1.0" transform="rotate(25 535.8 310.4)"/><ellipse cx="521.1" cy="316.6" rx="0.9" ry="0.6" transform="rotate(25 521.1 316.6)"/><ellipse cx="518.8" cy="303.3" rx="1.0" ry="0.7" transform="rotate(25 518.8 303.3)"/><ellipse cx="532.9" cy="310.3" rx="0.9" ry="0.7" transform="rotate(25 532.9 310.3)"/><ellipse cx="518.5" cy="318.3" rx="1.4" ry="0.8" transform="rotate(25 518.5 318.3)"/><ellipse cx="521.1" cy="307.6" rx="0.8" ry="0.9" transform="rotate(25 521.1 307.6)"/><ellipse cx="526.5" cy="309.3" rx="1.1" ry="0.8" transform="rotate(25 526.5 309.3)"/><ellipse cx="528.7" cy="310.6" rx="1.4" ry="0.9" transform="rotate(25 528.7 310.6)"/><ellipse cx="530.6" cy="308.4" rx="0.7" ry="0.6" transform="rotate(25 530.6 308.4)"/><ellipse cx="519.5" cy="302.8" rx="0.8" ry="0.5" transform="rotate(25 519.5 302.8)"/><ellipse cx="530.2" cy="309.6" rx="1.0" ry="0.6" transform="rotate(25 530.2 309.6)"/><ellipse cx="523.3" cy="304.2" rx="1.1" ry="0.6" transform="rotate(25 523.3 304.2)"/><ellipse cx="540.0" cy="312.4" rx="0.9" ry="1.0" transform="rotate(25 540.0 312.4)"/><ellipse cx="522.3" cy="314.5" rx="1.0" ry="0.7" transform="rotate(25 522.3 314.5)"/><ellipse cx="526.9" cy="308.1" rx="0.7" ry="0.6" transform="rotate(25 526.9 308.1)"/><ellipse cx="518.6" cy="301.7" rx="0.7" ry="0.7" transform="rotate(25 518.6 301.7)"/><ellipse cx="522.1" cy="317.1" rx="1.4" ry="0.8" transform="rotate(25 522.1 317.1)"/><ellipse cx="534.3" cy="309.3" rx="1.0" ry="1.0" transform="rotate(25 534.3 309.3)"/><ellipse cx="521.2" cy="305.6" rx="0.7" ry="0.9" transform="rotate(25 521.2 305.6)"/><ellipse cx="530.1" cy="309.1" rx="1.4" ry="0.6" transform="rotate(25 530.1 309.1)"/><ellipse cx="528.5" cy="310.1" rx="1.4" ry="0.9" transform="rotate(25 528.5 310.1)"/><ellipse cx="531.4" cy="309.8" rx="1.3" ry="0.6" transform="rotate(25 531.4 309.8)"/><ellipse cx="518.3" cy="319.2" rx="0.8" ry="0.9" transform="rotate(25 518.3 319.2)"/><ellipse cx="529.8" cy="309.2" rx="1.3" ry="0.7" transform="rotate(25 529.8 309.2)"/><ellipse cx="518.3" cy="304.9" rx="1.2" ry="0.8" transform="rotate(25 518.3 304.9)"/><ellipse cx="525.6" cy="312.1" rx="0.9" ry="0.5" transform="rotate(25 525.6 312.1)"/><ellipse cx="523.8" cy="304.2" rx="1.4" ry="1.0" transform="rotate(25 523.8 304.2)"/><ellipse cx="527.4" cy="307.8" rx="1.3" ry="0.9" transform="rotate(25 527.4 307.8)"/><ellipse cx="526.8" cy="310.7" rx="0.8" ry="0.6" transform="rotate(25 526.8 310.7)"/><ellipse cx="532.6" cy="310.6" rx="0.7" ry="0.5" transform="rotate(25 532.6 310.6)"/><ellipse cx="523.6" cy="307.0" rx="1.3" ry="0.6" transform="rotate(25 523.6 307.0)"/><ellipse cx="525.1" cy="313.2" rx="0.8" ry="0.9" transform="rotate(25 525.1 313.2)"/><ellipse cx="523.3" cy="307.7" rx="0.7" ry="0.7" transform="rotate(25 523.3 307.7)"/><ellipse cx="536.9" cy="310.6" rx="0.9" ry="0.6" transform="rotate(25 536.9 310.6)"/><ellipse cx="529.5" cy="308.0" rx="0.8" ry="0.8" transform="rotate(25 529.5 308.0)"/><ellipse cx="536.5" cy="313.9" rx="1.2" ry="0.9" transform="rotate(25 536.5 313.9)"/><ellipse cx="531.4" cy="312.1" rx="1.1" ry="0.5" transform="rotate(25 531.4 312.1)"/><ellipse cx="519.0" cy="319.8" rx="1.0" ry="0.6" transform="rotate(25 519.0 319.8)"/><ellipse cx="523.8" cy="308.5" rx="0.7" ry="0.9" transform="rotate(25 523.8 308.5)"/><ellipse cx="533.9" cy="313.4" rx="1.3" ry="1.0" transform="rotate(25 533.9 313.4)"/><ellipse cx="522.1" cy="315.9" rx="1.6" ry="0.8" transform="rotate(25 522.1 315.9)"/><ellipse cx="524.6" cy="305.5" rx="0.7" ry="0.6" transform="rotate(25 524.6 305.5)"/><ellipse cx="534.5" cy="313.5" rx="0.9" ry="0.6" transform="rotate(25 534.5 313.5)"/><ellipse cx="524.2" cy="313.0" rx="1.6" ry="0.9" transform="rotate(25 524.2 313.0)"/><ellipse cx="535.4" cy="313.1" rx="1.5" ry="0.8" transform="rotate(25 535.4 313.1)"/><ellipse cx="531.0" cy="311.3" rx="1.1" ry="0.9" transform="rotate(25 531.0 311.3)"/><ellipse cx="526.1" cy="310.3" rx="1.5" ry="0.6" transform="rotate(25 526.1 310.3)"/><ellipse cx="526.8" cy="306.6" rx="1.4" ry="1.0" transform="rotate(25 526.8 306.6)"/><ellipse cx="523.3" cy="304.7" rx="1.2" ry="0.7" transform="rotate(25 523.3 304.7)"/><ellipse cx="520.0" cy="316.9" rx="1.5" ry="0.7" transform="rotate(25 520.0 316.9)"/><ellipse cx="523.5" cy="308.3" rx="1.1" ry="0.6" transform="rotate(25 523.5 308.3)"/><ellipse cx="519.6" cy="304.3" rx="0.8" ry="0.6" transform="rotate(25 519.6 304.3)"/><ellipse cx="522.3" cy="317.8" rx="1.4" ry="0.7" transform="rotate(25 522.3 317.8)"/><ellipse cx="526.2" cy="306.5" rx="1.0" ry="0.5" transform="rotate(25 526.2 306.5)"/><ellipse cx="525.0" cy="303.9" rx="1.2" ry="0.8" transform="rotate(25 525.0 303.9)"/><ellipse cx="528.5" cy="308.1" rx="0.9" ry="0.7" transform="rotate(25 528.5 308.1)"/><ellipse cx="528.6" cy="309.5" rx="1.5" ry="0.5" transform="rotate(25 528.6 309.5)"/><ellipse cx="518.5" cy="306.0" rx="1.1" ry="0.8" transform="rotate(25 518.5 306.0)"/><ellipse cx="518.7" cy="321.3" rx="1.4" ry="0.9" transform="rotate(25 518.7 321.3)"/><circle cx="502" cy="300" r="0.8"/><circle cx="504" cy="303.5" r="0.8"/><circle cx="509.5" cy="302.5" r="0.8"/><circle cx="508" cy="307" r="0.8"/><circle cx="510" cy="309" r="0.8"/><circle cx="512.5" cy="311.5" r="0.8"/><circle cx="518" cy="308" r="0.8"/><circle cx="521" cy="315" r="0.8"/></g>
<g stroke="#fb1e10" stroke-width="2" fill="none">
<path d="M31 250.5 L111 263.8"/>
<path d="M433 285.2 L548 293.2"/>
</g>
<g fill="#2ee02e">
<rect x="72" y="259" width="5" height="5"/>
<rect x="479.5" y="285.5" width="6" height="5"/>
<rect x="539.5" y="294" width="6" height="5"/>
<rect x="563.5" y="293.5" width="6" height="5"/>
</g>
<g fill="#fb1e10" font-family="Liberation Sans, sans-serif" font-size="25">
<text x="74" y="259">#1</text>
<text x="431" y="283.5">4</text>
<text x="482" y="288">#6</text>
<text x="541" y="294.5">#7</text>
<text x="569" y="294.5">#8</text>
</g>
</svg>
<div class="t" style="left:281.5px;top:588px;color:#ececec;font-size:9px;letter-spacing:-0.6px;">类别</div>
<div class="a" style="left:281px;top:601px;width:13px;height:15px;background:#ffffff;"></div>
<div class="t" style="left:297.5px;top:605.3px;color:#ececec;font-size:9px;letter-spacing:-0.6px;">未分类点</div>
<div class="a" style="left:745px;top:613px;width:118px;height:1px;background:#ececec;"></div>
<div class="a" style="left:744.5px;top:610px;width:1px;height:6px;background:#f0f0f0;"></div>
<div class="a" style="left:862px;top:610px;width:1px;height:6px;background:#f0f0f0;"></div>
<div class="t" style="left:796px;top:598.6px;color:#ececec;font-size:9.8px;">400</div>
<div class="t" style="left:891.5px;top:106px;color:#e8e8e8;font-size:8px;letter-spacing:-0.3px;">电力勘测管理器</div>
<svg class="a" style="left:1056px;top:106px" width="8" height="8" viewBox="0 0 8 8" fill="none"><path d="M1.5 3.5 H5.5 V7 H1.5Z M3 3.5 V1.5 H7 V5.5 H5.5" stroke="#7a7b7d" stroke-width="0.9"/></svg>
<svg class="a" style="left:1070px;top:106px" width="7" height="7" viewBox="0 0 7 7" fill="none"><path d="M1 1 L6 6 M6 1 L1 6" stroke="#8a8b8d" stroke-width="0.9"/></svg>
<div class="t" style="left:894.5px;top:127.80000000000001px;color:#eeeeee;font-size:8px;letter-spacing:-0.3px;">搜索:</div>
<div class="a" style="left:916px;top:123px;width:160px;height:16px;border:1px solid #3a3b3d;background:#232426"></div>
<svg class="a" style="left:896px;top:144.5px" width="11" height="11" viewBox="0 0 11 11" fill="none"><rect x="0.5" y="0.5" width="10" height="10" rx="1" stroke="#c8922c" stroke-width="1"/><path d="M2.75 5.5 L4.73 7.48 L8.36 3.63" stroke="#f2b53a" stroke-width="1.4"/></svg>
<div class="t" style="left:911px;top:145.5px;color:#eeeeee;font-size:8px;">点</div>
<svg class="a" style="left:957.5px;top:144.5px" width="11" height="11" viewBox="0 0 11 11" fill="none"><rect x="0.5" y="0.5" width="10" height="10" rx="1" stroke="#c8922c" stroke-width="1"/><path d="M2.75 5.5 L4.73 7.48 L8.36 3.63" stroke="#f2b53a" stroke-width="1.4"/></svg>
<div class="t" style="left:972px;top:145.5px;color:#eeeeee;font-size:8px;">线</div>
<svg class="a" style="left:1019px;top:144.5px" width="11" height="11" viewBox="0 0 11 11" fill="none"><rect x="0.5" y="0.5" width="10" height="10" rx="1" stroke="#c8922c" stroke-width="1"/><path d="M2.75 5.5 L4.73 7.48 L8.36 3.63" stroke="#f2b53a" stroke-width="1.4"/></svg>
<div class="t" style="left:1034px;top:145.5px;color:#eeeeee;font-size:8px;">面</div>
<div class="a" style="left:894px;top:159px;width:182px;height:464px;border:1px solid #2f3032"></div>
<svg class="a" style="left:899px;top:164.7px" width="7" height="5" viewBox="0 0 7 5" fill="none"><path d="M0.5 0.5 L3.5 3.8 L6.5 0.5" stroke="#8a8b8d" stroke-width="0.9"/></svg>
<div class="t" style="left:910.3px;top:163.7px;color:#eeeeee;font-size:8px;letter-spacing:-0.3px;">数据源</div>
<svg class="a" style="left:912px;top:181.1px" width="7" height="5" viewBox="0 0 7 5" fill="none"><path d="M0.5 0.5 L3.5 3.8 L6.5 0.5" stroke="#8a8b8d" stroke-width="0.9"/></svg>
<svg class="a" style="left:924px;top:179px" width="11" height="11" viewBox="0 0 11 11" fill="none"><rect x="0.5" y="0.5" width="10" height="10" rx="1" stroke="#c8922c" stroke-width="1"/><path d="M2.75 5.5 L4.73 7.48 L8.36 3.63" stroke="#f2b53a" stroke-width="1.4"/></svg>
<div class="t" style="left:939.3px;top:180.1px;color:#eeeeee;font-size:8.5px;">250820</div>
<div class="a" style="left:934px;top:193px;width:141px;height:16px;background:#3b3322;"></div>
<svg class="a" style="left:926px;top:196.5px" width="5" height="8" viewBox="0 0 5 8" fill="none"><path d="M0.5 0.5 L4 4 L0.5 7.5" stroke="#8a8b8d" stroke-width="0.9"/></svg>
<svg class="a" style="left:937px;top:195.5px" width="11" height="11" viewBox="0 0 11 11" fill="none"><rect x="0.5" y="0.5" width="10" height="10" rx="1" stroke="#c8922c" stroke-width="1"/><path d="M2.75 5.5 L4.73 7.48 L8.36 3.63" stroke="#f2b53a" stroke-width="1.4"/></svg>
<div class="t" style="left:952.7px;top:196.5px;color:#e8402a;font-size:8px;letter-spacing:-0.1px;">PIPPT 悬垂物[0]</div>
<svg class="a" style="left:926px;top:212.8px" width="5" height="8" viewBox="0 0 5 8" fill="none"><path d="M0.5 0.5 L4 4 L0.5 7.5" stroke="#8a8b8d" stroke-width="0.9"/></svg>
<svg class="a" style="left:937px;top:211.5px" width="11" height="11" viewBox="0 0 11 11" fill="none"><rect x="0.5" y="0.5" width="10" height="10" rx="1" stroke="#c8922c" stroke-width="1"/><path d="M2.75 5.5 L4.73 7.48 L8.36 3.63" stroke="#f2b53a" stroke-width="1.4"/></svg>
<div class="t" style="left:952.7px;top:212.8px;color:#eeeeee;font-size:8px;letter-spacing:-0.1px;">PIPLK 交叉跨越[0]</div>
<svg class="a" style="left:926px;top:229px" width="5" height="8" viewBox="0 0 5 8" fill="none"><path d="M0.5 0.5 L4 4 L0.5 7.5" stroke="#8a8b8d" stroke-width="0.9"/></svg>
<svg class="a" style="left:937px;top:228px" width="11" height="11" viewBox="0 0 11 11" fill="none"><rect x="0.5" y="0.5" width="10" height="10" rx="1" stroke="#c8922c" stroke-width="1"/><path d="M2.75 5.5 L4.73 7.48 L8.36 3.63" stroke="#f2b53a" stroke-width="1.4"/></svg>
<div class="t" style="left:952.7px;top:229px;color:#eeeeee;font-size:8px;letter-spacing:-0.1px;">PIPNT 面地物[0]</div>
<div class="t" style="left:1px;top:633px;color:#f0f0f0;font-size:8.5px;letter-spacing:-0.1px;">塔(#11) X=61.3031 m Y=-196.9313 m Z=50.2184 m (未连消息: 33)</div>
<div class="t" style="left:1003px;top:633px;color:#f0f0f0;font-size:8.5px;letter-spacing:-0.6px;">当前点数: 81 百万</div>
<div class="a" style="left:380px;top:214px;width:322px;height:341.5px;background:#2a2b2d;border-radius:5px;overflow:hidden"><div class="a" style="left:0;top:0;width:322px;height:18.7px;background:#eff0f4"></div></div>
<svg class="a" style="left:688.5px;top:218.5px" width="8" height="8" viewBox="0 0 8 8" fill="none"><path d="M0.7 0.7 L7.3 7.3 M7.3 0.7 L0.7 7.3" stroke="#333" stroke-width="1"/></svg>
<div class="a" style="left:387px;top:240px;width:308px;height:128.5px;border:1px solid #3a3b3d;background:#222325"></div>
<svg class="a" style="left:391px;top:245.8px" width="7" height="5" viewBox="0 0 7 5" fill="none"><path d="M0.5 0.5 L3.5 3.8 L6.5 0.5" stroke="#77787a" stroke-width="0.9"/></svg>
<svg class="a" style="left:404px;top:244px" width="10" height="10" viewBox="0 0 10 10" fill="none"><rect x="0.5" y="0.5" width="9" height="9" rx="1" stroke="#c8922c" stroke-width="1"/><path d="M2.5 5.0 L4.3 6.8 L7.6 3.3" stroke="#f2b53a" stroke-width="1.4"/></svg>
<svg class="a" style="left:419.5px;top:243.5px" width="10" height="10" viewBox="0 0 10 10" fill="none"><rect x="2.5" y="0.5" width="1.7" height="1.7" fill="#cfcfcf"/><rect x="6" y="0.5" width="1.7" height="1.7" fill="#cfcfcf"/><rect x="0.3" y="4.2" width="1.7" height="1.7" fill="#cfcfcf"/><rect x="4.2" y="4.2" width="1.7" height="1.7" fill="#cfcfcf"/><rect x="8.2" y="4.2" width="1.7" height="1.7" fill="#cfcfcf"/><rect x="2.5" y="8" width="1.7" height="1.7" fill="#cfcfcf"/><rect x="6" y="8" width="1.7" height="1.7" fill="#cfcfcf"/></svg>
<div class="t" style="left:433.5px;top:244.8px;color:#eeeeee;font-size:8px;letter-spacing:-0.3px;">点云列表</div>
<svg class="a" style="left:417px;top:259.8px" width="10" height="10" viewBox="0 0 10 10" fill="none"><rect x="0.5" y="0.5" width="9" height="9" rx="1" stroke="#c8922c" stroke-width="1"/><path d="M2.5 5.0 L4.3 6.8 L7.6 3.3" stroke="#f2b53a" stroke-width="1.4"/></svg>
<div class="t" style="left:432.4px;top:260.6px;color:#e8e8e8;font-size:8px;letter-spacing:-0.2px;">CY_5_3-6</div>
<svg class="a" style="left:388px;top:374px" width="11" height="11" viewBox="0 0 11 11" fill="none"><rect x="0.5" y="0.5" width="10" height="10" rx="1" stroke="#c8922c" stroke-width="1"/><path d="M2.75 5.5 L4.73 7.48 L8.36 3.63" stroke="#f2b53a" stroke-width="1.4"/></svg>
<div class="t" style="left:403.4px;top:375.5px;color:#eeeeee;font-size:8px;letter-spacing:-0.3px;">高级设置</div>
<div class="a" style="left:387.5px;top:395px;width:307.5px;height:50.5px;border:1px solid #38393b"></div>
<div class="t" style="left:395px;top:391px;padding:0 3px;background:#2a2b2d;color:#a0a0a0;letter-spacing:-0.3px">地面点分类</div>
<div class="t" style="left:393.6px;top:409.3px;color:#eeeeee;font-size:8px;letter-spacing:-0.3px;">最大建筑尺寸:</div>
<div class="a" style="left:451.4px;top:405.5px;width:36.200000000000045px;height:15.0px;border:1px solid #3a3b3d;background:#1c1d1f"></div>
<div class="t" style="left:453.9px;top:408.0px;color:#f0f0f0;font-size:8.5px;letter-spacing:0px">50</div>
<svg class="a" style="left:481.1px;top:408.0px" width="5" height="10" viewBox="0 0 5 10" fill="none"><path d="M0.3 3.5 L2.5 0.8 L4.7 3.5Z M0.3 6.5 L2.5 9.2 L4.7 6.5Z" fill="#a0a0a0"/></svg>
<div class="t" style="left:492.4px;top:408.5px;color:#eeeeee;font-size:8.5px;">m</div>
<div class="t" style="left:514.2px;top:409.3px;color:#eeeeee;font-size:8px;letter-spacing:-0.3px;">最大地形坡度:</div>
<div class="a" style="left:572.4px;top:405.5px;width:94.30000000000007px;height:15.0px;border:1px solid #3a3b3d;background:#1c1d1f"></div>
<div class="t" style="left:574.9px;top:408.0px;color:#f0f0f0;font-size:8.5px;letter-spacing:0px">89</div>
<svg class="a" style="left:660.2px;top:408.0px" width="5" height="10" viewBox="0 0 5 10" fill="none"><path d="M0.3 3.5 L2.5 0.8 L4.7 3.5Z M0.3 6.5 L2.5 9.2 L4.7 6.5Z" fill="#a0a0a0"/></svg>
<div class="t" style="left:671.5px;top:409.5px;color:#eeeeee;font-size:8.5px;">°</div>
<div class="t" style="left:393.6px;top:428.5px;color:#eeeeee;font-size:8px;letter-spacing:-0.3px;">迭代角度:</div>
<div class="a" style="left:451.4px;top:424.5px;width:36.200000000000045px;height:15.199999999999989px;border:1px solid #3a3b3d;background:#1c1d1f"></div>
<div class="t" style="left:453.9px;top:427.1px;color:#f0f0f0;font-size:8.5px;letter-spacing:0px">7</div>
<svg class="a" style="left:481.1px;top:427.1px" width="5" height="10" viewBox="0 0 5 10" fill="none"><path d="M0.3 3.5 L2.5 0.8 L4.7 3.5Z M0.3 6.5 L2.5 9.2 L4.7 6.5Z" fill="#a0a0a0"/></svg>
<div class="t" style="left:492.5px;top:428px;color:#eeeeee;font-size:8.5px;">°</div>
<div class="t" style="left:514.2px;top:428.6px;color:#eeeeee;font-size:8px;letter-spacing:-0.3px;">迭代距离:</div>
<div class="a" style="left:572.4px;top:424.3px;width:94.30000000000007px;height:15.5px;border:1px solid #c8922c;background:#1c1d1f"></div>
<div class="t" style="left:573.9px;top:427.05px;color:#f0f0f0;font-size:8.5px;letter-spacing:-0.3px">0.700</div>
<svg class="a" style="left:660.2px;top:427.05px" width="5" height="10" viewBox="0 0 5 10" fill="none"><path d="M0.3 3.5 L2.5 0.8 L4.7 3.5Z M0.3 6.5 L2.5 9.2 L4.7 6.5Z" fill="#a0a0a0"/></svg>
<div class="a" style="left:594.6px;top:427.3px;width:0.9px;height:9.5px;background:#f0f0f0;"></div>
<div class="t" style="left:671.5px;top:428px;color:#eeeeee;font-size:8.5px;">m</div>
<div class="a" style="left:387.5px;top:456.3px;width:307.5px;height:30.69999999999999px;border:1px solid #38393b"></div>
<div class="a" style="left:396px;top:451px;width:116px;height:9px;background:#2a2b2d;"></div>
<svg class="a" style="left:398px;top:450.6px" width="10" height="10" viewBox="0 0 10 10" fill="none"><rect x="0.5" y="0.5" width="9" height="9" rx="1" stroke="#8a8b8d" stroke-width="1"/></svg>
<div class="t" style="left:413.4px;top:451.5px;color:#747577;letter-spacing:-0.3px">地面点加厚（高地高度分类）</div>
<div class="t" style="left:394.2px;top:470.3px;color:#6a6b6d;font-size:8px;letter-spacing:-0.3px;">最小地面高度:</div>
<div class="a" style="left:451.3px;top:465.4px;width:50.89999999999998px;height:15.400000000000034px;background:#303133"></div>
<div class="t" style="left:453.8px;top:468.1px;color:#6e6f71;font-size:8.5px;letter-spacing:0px">-0.100</div>
<svg class="a" style="left:495.7px;top:468.1px" width="5" height="10" viewBox="0 0 5 10" fill="none"><path d="M0.3 3.5 L2.5 0.8 L4.7 3.5Z M0.3 6.5 L2.5 9.2 L4.7 6.5Z" fill="#505153"/></svg>
<div class="t" style="left:506.6px;top:469.3px;color:#6a6b6d;font-size:8.5px;">m</div>
<div class="t" style="left:543.2px;top:470px;color:#6a6b6d;font-size:8px;letter-spacing:-0.3px;">最大地面高度:</div>
<div class="a" style="left:601.4px;top:465.4px;width:50.200000000000045px;height:15.400000000000034px;background:#303133"></div>
<div class="t" style="left:603.9px;top:468.1px;color:#6e6f71;font-size:8.5px;letter-spacing:0px">0.100</div>
<svg class="a" style="left:645.1px;top:468.1px" width="5" height="10" viewBox="0 0 5 10" fill="none"><path d="M0.3 3.5 L2.5 0.8 L4.7 3.5Z M0.3 6.5 L2.5 9.2 L4.7 6.5Z" fill="#505153"/></svg>
<div class="t" style="left:655.4px;top:469.3px;color:#6a6b6d;font-size:8.5px;">m</div>
<div class="a" style="left:387.5px;top:497.6px;width:307.5px;height:31.0px;border:1px solid #38393b"></div>
<div class="t" style="left:395px;top:493.6px;padding:0 3px;background:#2a2b2d;color:#a0a0a0;letter-spacing:-0.3px">分类阈值</div>
<div class="t" style="left:393.3px;top:511.4px;color:#eeeeee;font-size:8px;letter-spacing:-0.3px;">建筑物分类阈值:</div>
<div class="a" style="left:459.2px;top:507.3px;width:24.80000000000001px;height:14.199999999999989px;border:1px solid #3a3b3d;background:#1c1d1f"></div>
<div class="t" style="left:461.7px;top:509.4px;color:#f0f0f0;font-size:8.5px;letter-spacing:0px">1.2</div>
<svg class="a" style="left:477.5px;top:509.4px" width="5" height="10" viewBox="0 0 5 10" fill="none"><path d="M0.3 3.5 L2.5 0.8 L4.7 3.5Z M0.3 6.5 L2.5 9.2 L4.7 6.5Z" fill="#a0a0a0"/></svg>
<div class="t" style="left:488.6px;top:510.5px;color:#eeeeee;font-size:8.5px;">m</div>
<div class="t" style="left:546.9px;top:511.4px;color:#eeeeee;font-size:8px;letter-spacing:-0.3px;">植被分类阈值:</div>
<div class="a" style="left:605.3px;top:507.3px;width:24.40000000000009px;height:14.199999999999989px;border:1px solid #3a3b3d;background:#1c1d1f"></div>
<div class="t" style="left:607.8px;top:509.4px;color:#f0f0f0;font-size:8.5px;letter-spacing:0px">1.2</div>
<svg class="a" style="left:623.2px;top:509.4px" width="5" height="10" viewBox="0 0 5 10" fill="none"><path d="M0.3 3.5 L2.5 0.8 L4.7 3.5Z M0.3 6.5 L2.5 9.2 L4.7 6.5Z" fill="#a0a0a0"/></svg>
<div class="t" style="left:633.8px;top:510.5px;color:#eeeeee;font-size:8.5px;">m</div>
<div class="a" style="left:387.2px;top:533px;width:51.5px;height:15px;background:#3a3b3d"></div>
<div class="t" style="left:387.2px;width:51.5px;text-align:center;top:536.5px;color:#e6e6e6;letter-spacing:-0.3px">默认值</div>
<div class="a" style="left:588px;top:533px;width:51.39999999999998px;height:15px;background:#454648"></div>
<div class="t" style="left:588px;width:51.39999999999998px;text-align:center;top:536.5px;color:#e6e6e6;letter-spacing:-0.3px">确定</div>
<div class="a" style="left:643.2px;top:533px;width:51.59999999999991px;height:15px;background:#3a3b3d"></div>
<div class="t" style="left:643.2px;width:51.59999999999991px;text-align:center;top:536.5px;color:#e6e6e6;letter-spacing:-0.3px">取消</div>
<svg class="a" style="left:620px;top:546px" width="8" height="12" viewBox="0 0 8 12" fill="none"><path d="M0.5 0.5 V10 L2.8 7.8 L4.5 11.2 L6 10.5 L4.4 7.2 H7.5Z" fill="#fff" stroke="#000" stroke-width="0.8"/></svg>
</body></html>
